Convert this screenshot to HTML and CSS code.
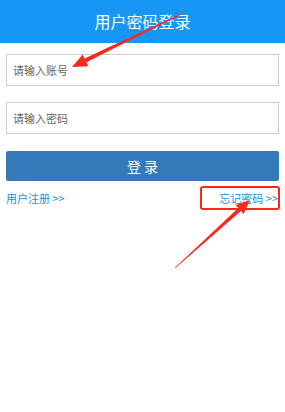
FILE: index.html
```html
<!DOCTYPE html>
<html lang="zh-CN">
<head>
	<meta charset="UTF-8">
	<title>用户密码登录</title>
	<link rel="stylesheet" href="styles.css">
</head>
<body>
<div class="page">
	<div class="header">用户密码登录</div>
	<div class="form">
		<input class="inp" type="text" placeholder="请输入账号">
		<input class="inp inp-pwd" type="password" placeholder="请输入密码">
		<button class="btn">登 录</button>
		<div class="links">
			<a href="#">用户注册 &gt;&gt;</a>
			<a href="#" class="forget">忘记密码 &gt;&gt;</a>
		</div>
	</div>
	<!-- 标注箭头 -->
	<svg class="marks" width="285" height="412" viewBox="0 0 285 412">
		<polygon fill="#f52a1c" points="181.2,14.4 86.4,62.2 88.3,66.2 72,67 82.7,54.6 84.6,58.6 180.8,13.6"/>
		<polygon fill="#f52a1c" points="175.2,268.2 240.9,210.9 243.6,213.9 250,200 235.6,205 238.3,207.9 174.8,267.8"/>
	</svg>
</div>
</body>
</html>
```

FILE: styles.css
```css
*{
	margin: 0;
	padding: 0;
	box-sizing: border-box;
}
body{
	background: #fff;
	font-family: "Noto Sans CJK SC", "Liberation Sans", sans-serif;
}
.page{
	width: 285px;
	height: 412px;
	position: relative;
}
.header{
	height: 43px;
	line-height: 42px;
	background: #1797f5;
	color: #fff;
	font-size: 16px;
	text-align: center;
}
.form{
	padding: 11px 6px 0;
	display: flex;
	flex-direction: column;
}
.inp{
	height: 32px;
	border: 1px solid #ccc;
	padding-left: 6px;
	font-size: 11px;
	font-family: inherit;
	color: #333;
	outline: none;
}
.inp::placeholder{
	color: #666;
}
.inp-pwd{
	margin-top: 16px;
}
.btn{
	margin-top: 17px;
	height: 30px;
	border: none;
	border-radius: 2px;
	background: #337ab7;
	color: #fff;
	font-size: 14px;
	font-family: inherit;
}
.links{
	display: flex;
	justify-content: space-between;
	align-items: center;
	margin-top: 5px;
	height: 24px;
}
.links a{
	color: #1a8fe3;
	font-size: 11px;
	text-decoration: none;
}
.forget{
	border: 2px solid #f52a1c;
	border-radius: 3px;
	height: 24px;
	line-height: 20px;
	width: 80px;
	text-align: right;
	margin-right: -1px;
}
.marks{
	position: absolute;
	top: 0;
	left: 0;
	pointer-events: none;
}
```
